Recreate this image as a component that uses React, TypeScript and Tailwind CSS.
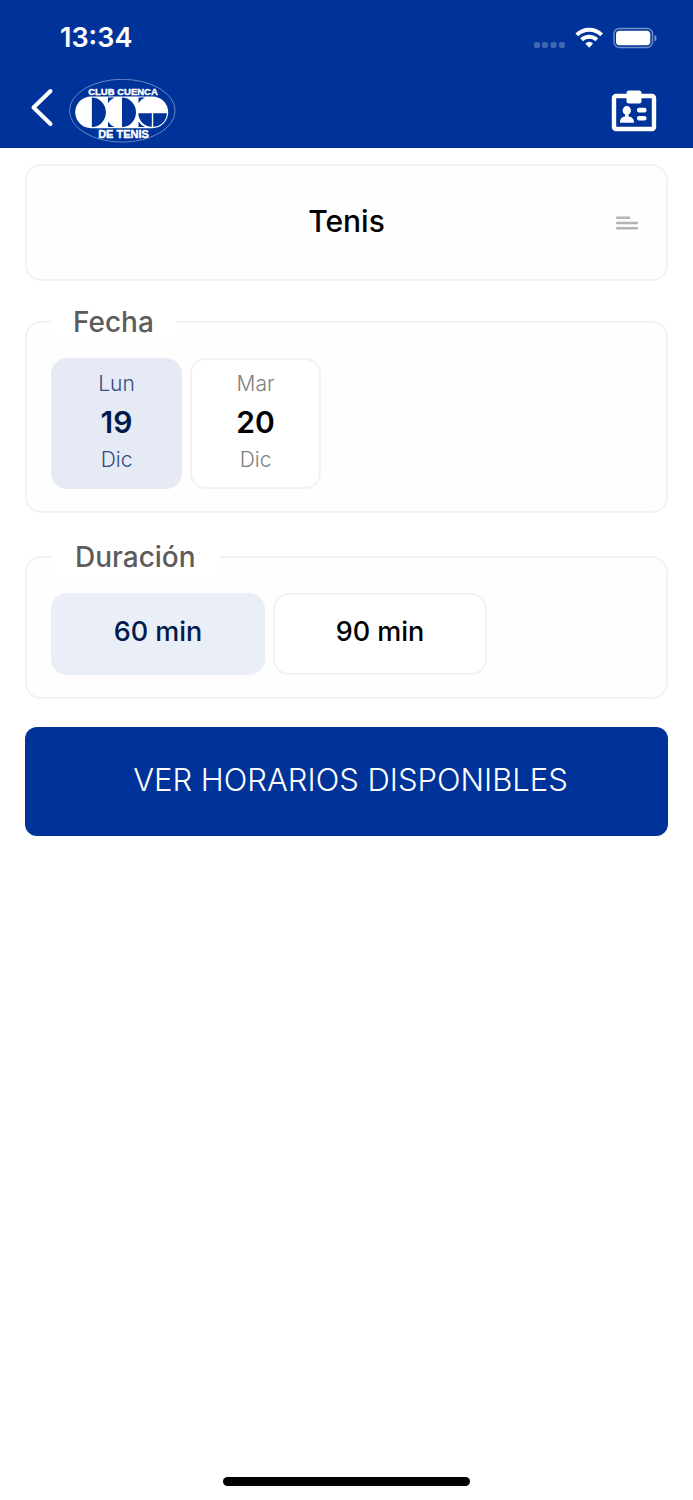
import { useState } from "react";

function StatusIcons() {
  return (
    <svg width="124" height="24" viewBox="0 0 124 24" aria-hidden="true">
      <g fill="#fff" fillOpacity=".25">
        <rect x="1" y="16" width="6" height="6" rx="2" />
        <rect x="9" y="16" width="6" height="6" rx="2" />
        <rect x="17.500" y="16" width="6" height="6" rx="2" />
        <rect x="26" y="16" width="6" height="6" rx="2" />
      </g>
      <g fill="none" stroke="#fff" strokeWidth="4">
        <path d="M43.800 8.800a17.600 17.600 0 0 1 24.800 0" />
        <path d="M48.600 13.800a11 11 0 0 1 15.200 0" />
      </g>
      <path d="M52.300 17.500a6 6 0 0 1 7.800 0l-3.900 4.300z" fill="#fff" />
      <rect x="81" y="2.500" width="38.500" height="19" rx="5.500" fill="none" stroke="#fff" strokeOpacity=".45" strokeWidth="1.400" />
      <rect x="83" y="4.700" width="34.300" height="14.600" rx="3.500" fill="#fff" />
      <path d="M121.500 9v6.500c2.600-1 2.600-5.500 0-6.500z" fill="#fff" fillOpacity=".5" />
    </svg>
  );
}

function ClubLogo() {
  return (
    <svg width="107" height="65" viewBox="0 0 107 65" role="img" aria-label="Club Cuenca de Tenis">
      <ellipse cx="53.300" cy="31.700" rx="52.800" ry="31.400" fill="none" stroke="#fff" strokeOpacity=".5" strokeWidth=".8" />
      <rect x="6.200" y="17.400" width="93" height="31.800" rx="15.900" fill="#fff" />
      <g fill="#003399">
        <path d="M22.900 18.600a14 14.700 0 0 1 0 29.400z" />
        <path d="M53 18.600a14 14.700 0 0 1 0 29.400z" />
        <path d="M39 18.600h6.500q-4 1.800-6.500 5.600zM39 48v-5.600q2.500 3.800 6.500 5.600z" />
        <path d="M69.500 18.600h6.500q-4 1.800-6.500 5.600zM69.500 48v-5.600q2.500 3.800 6.500 5.600z" />
        <path d="M69.400 34.200h13.400v13.600a13.600 13.600 0 0 1-13.400-13.600zM84.200 34.200h13.600a13.600 13.600 0 0 1-13.600 13.600z" />
      </g>
      <g fill="#fff" stroke="#fff" strokeWidth=".4" textAnchor="middle" fontFamily="Liberation Sans, sans-serif" fontWeight="700">
        <text x="54" y="16" fontSize="9.500">CLUB CUENCA</text>
        <text x="54.500" y="58.500" fontSize="11">DE TENIS</text>
      </g>
    </svg>
  );
}

function BadgeIcon() {
  return (
    <svg width="46" height="42" viewBox="0 0 46 42" aria-hidden="true">
      <rect x="3" y="6" width="40" height="33" rx="2" fill="none" stroke="#fff" strokeWidth="4.400" />
      <rect x="15.500" y="0.500" width="15" height="13" rx="2.500" fill="#fff" />
      <ellipse cx="15.800" cy="20.500" rx="4.200" ry="4.400" fill="#fff" />
      <path d="M14 23h3.600v3.500c3 .4 5.400 2.200 5.400 6.200H9c0-4 2-5.800 5-6.200z" fill="#fff" />
      <rect x="26" y="17.800" width="9.500" height="4.600" rx="2" fill="#fff" />
      <rect x="26" y="26" width="9.500" height="4.600" rx="2" fill="#fff" />
    </svg>
  );
}

const dates = [
  { weekday: "Lun", day: "19", month: "Dic" },
  { weekday: "Mar", day: "20", month: "Dic" },
];

const durations = [60, 90];

export default function App() {
  const [date, setDate] = useState("19");
  const [duration, setDuration] = useState(60);

  return (
    <div className="flex min-h-screen flex-col bg-white font-['Inter',sans-serif] text-black">
      <header className="bg-[#003399] text-white">
        <div className="flex h-[76px] items-center justify-between pr-9 pl-[60px]">
          <span className="text-[27px] leading-8 font-semibold">13:34</span>
          <StatusIcons />
        </div>
        <div className="flex h-[72px] items-start justify-between pr-9 pl-[30px]">
          <div className="flex items-start gap-[15px] pt-[3px]">
            <button type="button" aria-label="Volver" className="pt-[9px]">
              <svg width="24" height="40" viewBox="0 0 24 40" fill="none" stroke="#fff" strokeWidth="4" strokeLinecap="round" strokeLinejoin="round" aria-hidden="true">
                <path d="M20.500 3L3.500 19.500L20.500 36" />
              </svg>
            </button>
            <ClubLogo />
          </div>
          <button type="button" aria-label="Carné de socio" className="pt-[14px]">
            <BadgeIcon />
          </button>
        </div>
      </header>

      <main className="flex flex-col px-[25px] pt-4">
        <button type="button" className="grid h-[117px] grid-cols-[1fr_auto_1fr] items-center rounded-2xl border-2 border-[#f2f2f2] bg-[#fefefe] px-7">
          <span className="col-start-2 pb-1 text-[30px] leading-9 font-medium">Tenis</span>
          <svg className="justify-self-end" width="22" height="14" viewBox="0 0 22 14" stroke="#b4b4b4" strokeWidth="2.400" strokeLinecap="round" aria-hidden="true">
            <path d="M1.200 1.800h12M1.200 7h19.600M1.200 12.200h19.600" />
          </svg>
        </button>

        <fieldset className="mt-[21px] rounded-2xl border-2 border-[#f2f2f2] bg-[#fefefe] px-6 pb-[22px]">
          <legend className="bg-white px-[22px] text-[28px] leading-10 font-medium text-[#5c5c5c]">Fecha</legend>
          <div className="flex gap-2 pt-4">
            {dates.map((d) => {
              const active = d.day === date;
              return (
                <button
                  key={d.day}
                  type="button"
                  aria-pressed={active}
                  onClick={() => setDate(d.day)}
                  className={
                    "flex h-[131px] w-[131px] flex-col items-center justify-center rounded-2xl border-2 pb-1 " +
                    (active ? "border-[#e5eaf5] bg-[#e5eaf5] text-[#334d80]" : "border-[#f2f2f2] bg-white text-[#808080]")
                  }
                >
                  <span className="text-[21px] leading-8 font-light">{d.weekday}</span>
                  <span className={"text-[30px] leading-[44px] font-semibold " + (active ? "text-[#001a4d]" : "text-black")}>
                    {d.day}
                  </span>
                  <span className="text-[21px] leading-8 font-light">{d.month}</span>
                </button>
              );
            })}
          </div>
        </fieldset>

        <fieldset className="mt-6 rounded-2xl border-2 border-[#f2f2f2] bg-[#fefefe] px-6 pb-[22px]">
          <legend className="bg-white px-6 text-[28px] leading-10 font-medium text-[#5c5c5c]">Duración</legend>
          <div className="flex gap-2 pt-4">
            {durations.map((minutes) => {
              const active = minutes === duration;
              return (
                <button
                  key={minutes}
                  type="button"
                  aria-pressed={active}
                  onClick={() => setDuration(minutes)}
                  className={
                    "h-[82px] w-[214px] rounded-2xl border-2 pb-1 text-[27px] leading-8 font-medium " +
                    (active ? "border-[#e9eef7] bg-[#e9eef7] text-[#001a4d]" : "border-[#f2f2f2] bg-white text-black")
                  }
                >
                  {minutes} min
                </button>
              );
            })}
          </div>
        </fieldset>

        <button type="button" className="mt-7 h-[109px] rounded-xl bg-[#003399] pb-1 pl-2 text-[31px] leading-9 font-light text-white">
          VER HORARIOS DISPONIBLES
        </button>
      </main>

      <footer className="mt-auto flex justify-center pt-8 pb-[14px]">
        <div className="h-[9px] w-[247px] rounded-full bg-black" />
      </footer>
    </div>
  );
}
